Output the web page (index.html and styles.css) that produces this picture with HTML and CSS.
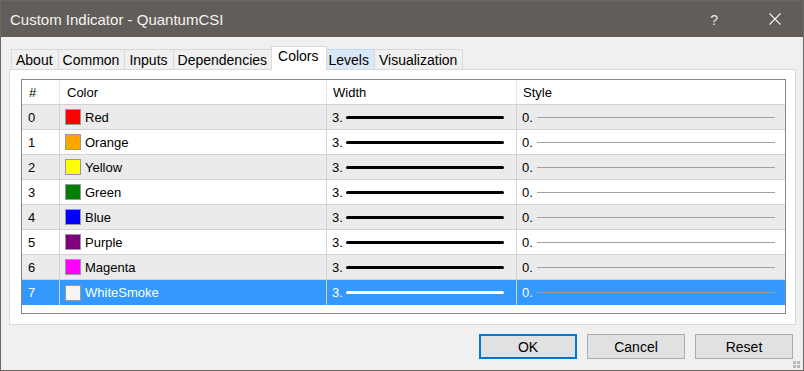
FILE: index.html
```html
<!DOCTYPE html>
<html lang="en">
  <head>
    <meta charset="UTF-8" />
    <title>Custom Indicator - QuantumCSI</title>
    <link rel="stylesheet" href="styles.css">
  </head>
  <body>
    <div class="window">
      <div class="titlebar">
        <span class="title">Custom Indicator - QuantumCSI</span>
        <span class="help">?</span>
        <svg class="close" width="12" height="12" viewBox="0 0 12 12">
          <path d="M0.5 0.5 L11.5 11.5 M11.5 0.5 L0.5 11.5" stroke="#f2f2f2" stroke-width="1.1" fill="none" />
        </svg>
      </div>

      <div class="client">
        <ul class="tabs">
          <li>About</li>
          <li>Common</li>
          <li>Inputs</li>
          <li>Dependencies</li>
          <li class="active">Colors</li>
          <li class="hover">Levels</li>
          <li>Visualization</li>
        </ul>

        <div class="panel">
          <div class="list" id="list">
            <div class="row head">
              <div class="cell">#</div>
              <div class="cell">Color</div>
              <div class="cell">Width</div>
              <div class="cell">Style</div>
            </div>
          </div>
        </div>

        <div class="buttons">
          <button class="default">OK</button>
          <button>Cancel</button>
          <button>Reset</button>
        </div>

        <svg class="grip" width="8" height="8" viewBox="0 0 8 8">
          <rect x="0" y="0" width="3" height="3" fill="#b8b8b8" />
          <rect x="4" y="0" width="3" height="3" fill="#b8b8b8" />
          <rect x="0" y="4" width="3" height="3" fill="#b8b8b8" />
          <rect x="4" y="4" width="3" height="3" fill="#b8b8b8" />
        </svg>
      </div>
    </div>

    <script>
      const colors = [
        ["Red", "#ff0000"],
        ["Orange", "#ffa500"],
        ["Yellow", "#ffff00"],
        ["Green", "#008000"],
        ["Blue", "#0000ff"],
        ["Purple", "#800080"],
        ["Magenta", "#ff00ff"],
        ["WhiteSmoke", "#f5f5f5"],
      ];
      const selected = 7;
      const list = document.getElementById("list");

      const rows = colors.map(([name, hex], i) => {
        const cls = i === selected ? "row selected" : i % 2 === 0 ? "row even" : "row";
        return `
          <div class="${cls}">
            <div class="cell">${i}</div>
            <div class="cell color">
              <span class="swatch" style="background: ${hex}"></span>${name}
            </div>
            <div class="cell width">3.<span class="thick"></span></div>
            <div class="cell style">0.<span class="thin"></span></div>
          </div>
        `;
      });

      list.insertAdjacentHTML("beforeend", rows.join(""));
    </script>
  </body>
</html>
```

FILE: styles.css
```css
body {
  margin: 0;
  padding: 0;
  font-family: "Liberation Sans", Arial, sans-serif;
}

.window {
  width: 804px;
  height: 371px;
  box-sizing: border-box;
  border: 1px solid #6a6663;
  display: flex;
  flex-direction: column;
}

.titlebar {
  height: 36px;
  background-color: #625d58;
  display: flex;
  align-items: center;
  padding-left: 9px;
  color: #f4f4f4;
}

.title {
  font-size: 15px;
  flex: 1;
}

.help {
  font-size: 14px;
  margin-right: 51px;
  margin-top: 1px;
  color: #ececec;
}

.close {
  margin-right: 22px;
}

.client {
  flex: 1;
  background-color: #f0f0f0;
  padding-top: 9px;
  position: relative;
}

.tabs {
  list-style-type: none;
  margin: 0 0 0 10px;
  padding: 0;
  display: flex;
  align-items: flex-end;
  height: 23px;
}

.tabs li {
  height: 19px;
  padding: 0 5px 0 4px;
  border: 1px solid #d9d9d9;
  border-bottom: none;
  margin-left: -1px;
  font-size: 14px;
  line-height: 20px;
  color: #000;
  background-color: #f0f0f0;
}

.tabs li:first-child {
  margin-left: 0;
}

.tabs li.active {
  position: relative;
  z-index: 1;
  height: 23px;
  margin: 0 -2px -1px -2px;
  padding: 0 7px 0 6px;
  background-color: #fff;
  line-height: 18px;
}

.tabs li.hover {
  background-color: #d9e8f7;
  border-color: #c5d7ea;
}

.panel {
  margin: 0 7px 0 8px;
  height: 256px;
  box-sizing: border-box;
  border: 1px solid #d9d9d9;
  background-color: #fff;
  padding: 9px 9px 10px 11px;
}

.list {
  height: 235px;
  box-sizing: border-box;
  border: 1px solid #828790;
  background-color: #fff;
  font-size: 13px;
  color: #000;
}

.row {
  display: grid;
  grid-template-columns: 38px 267px 190px 1fr;
  height: 25px;
  box-sizing: border-box;
  border-bottom: 1px solid #d2d2d2;
}

.row.even {
  background-color: #ebebeb;
}

.row.selected {
  background-color: #3399ff;
  color: #fff;
  border-bottom: none;
}

.cell {
  border-right: 1px solid #d2d2d2;
  display: flex;
  align-items: center;
  padding-left: 6px;
  white-space: nowrap;
}

.cell:last-child {
  border-right: none;
}

.head .cell {
  border-right-color: #e8e8e8;
  padding-left: 7px;
}

.head .cell:nth-child(n + 3) {
  padding-left: 6px;
}

.cell.color {
  padding-left: 5px;
  gap: 4px;
}

.swatch {
  width: 14px;
  height: 14px;
  border: 1px solid #999;
}

.cell.width,
.cell.style {
  padding-left: 5px;
}

.thick {
  width: 158px;
  height: 3px;
  border-radius: 2px;
  background-color: #000;
  margin-left: 3px;
}

.selected .thick {
  background-color: #fff;
}

.thin {
  width: 238px;
  height: 1px;
  background-color: #a0a0a0;
  margin-left: 4px;
}

.buttons {
  display: flex;
  justify-content: flex-end;
  gap: 10px;
  margin-top: 9px;
  padding-right: 10px;
}

button {
  width: 98px;
  height: 25px;
  border: 1px solid #adadad;
  background-color: #e1e1e1;
  font-family: "Liberation Sans", Arial, sans-serif;
  font-size: 14px;
  color: #000;
  padding: 0;
}

button.default {
  border: 2px solid #0078d7;
}

.grip {
  position: absolute;
  right: 2px;
  bottom: 1px;
}
```
